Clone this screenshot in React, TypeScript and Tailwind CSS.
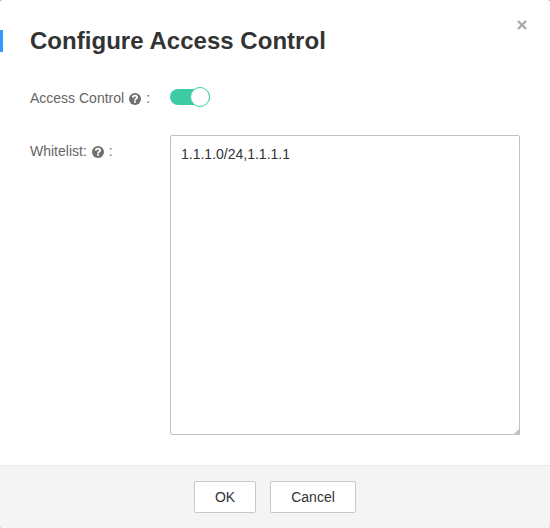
import React from "react";

function Help() {
  return (
    <svg className="mt-px size-3 shrink-0" viewBox="0 0 12 12">
      <circle cx="6" cy="6" r="6" fill="#707070" />
      <path d="M3.8 4.6C3.9 1.9 8.1 2 8.1 4.5C8.1 5.9 6 5.8 6 7.4" fill="none" stroke="#fff" strokeWidth="1.8" />
      <path d="M5.1 8.1h1.8v1.7H5.1z" fill="#fff" />
    </svg>
  );
}

export default function App() {
  return (
    <div className="bg-[#999]">
      <div className="flex h-[528px] w-[550px] flex-col overflow-hidden rounded-xs bg-white font-['Liberation_Sans',Arial,sans-serif] text-sm text-[#666]">
        <header className="flex h-[84px] items-start justify-between">
          <div className="mt-[30px] flex h-[22px] items-center">
            <span className="h-[22px] w-[3px] bg-[#3399ff]" />
            <h1 className="ml-[27px] text-2xl leading-[22px] font-bold tracking-[0.03px] text-[#333]">Configure Access Control</h1>
          </div>
          <button aria-label="Close" className="mt-5 mr-[23px]">
            <svg className="size-[10px]" viewBox="0 0 10 10"><path d="M1 1l8 8M9 1L1 9" stroke="#aaa" strokeWidth="2.4" /></svg>
          </button>
        </header>
        <main className="flex flex-1 flex-col pl-[30px]">
          <div className="flex h-[51px]">
            <div className="flex h-[28px] w-[140px] items-center"><span className="mr-[5px]">Access Control</span><Help /><span className="ml-[5px]">:</span></div>
            <span className="mt-[5px] flex h-4 w-10 items-center justify-end rounded-full bg-[#3dcca6]">
              <span className="size-5 shrink-0 rounded-full border border-[#3dcca6] bg-white" />
            </span>
          </div>
          <div className="flex">
            <div className="flex h-8 w-[140px] items-center"><span className="mr-[5px]">Whitelist:</span><Help /><span className="ml-[5px]">:</span></div>
            <div className="relative h-[300px] w-[350px]">
              <textarea defaultValue="1.1.1.0/24,1.1.1.1" className="block size-full resize-none rounded-xs border border-[#c2c2c2] px-[10px] py-[8px] text-sm text-[#333] outline-none" />
              <svg className="pointer-events-none absolute right-0 bottom-0 size-[7px]" viewBox="0 0 7 7"><path d="M7 0v7H0z" fill="#c2c2c2" /></svg>
            </div>
          </div>
        </main>
        <footer className="flex h-[63px] items-center justify-center gap-[14px] border-t border-[#e8e8e8] bg-[#f4f4f4] text-[#333]">
          <button className="h-8 w-[62px] rounded-xs border border-[#c8c8c8] bg-white">OK</button>
          <button className="h-8 w-[86px] rounded-xs border border-[#c8c8c8] bg-white">Cancel</button>
        </footer>
      </div>
    </div>
  );
}
